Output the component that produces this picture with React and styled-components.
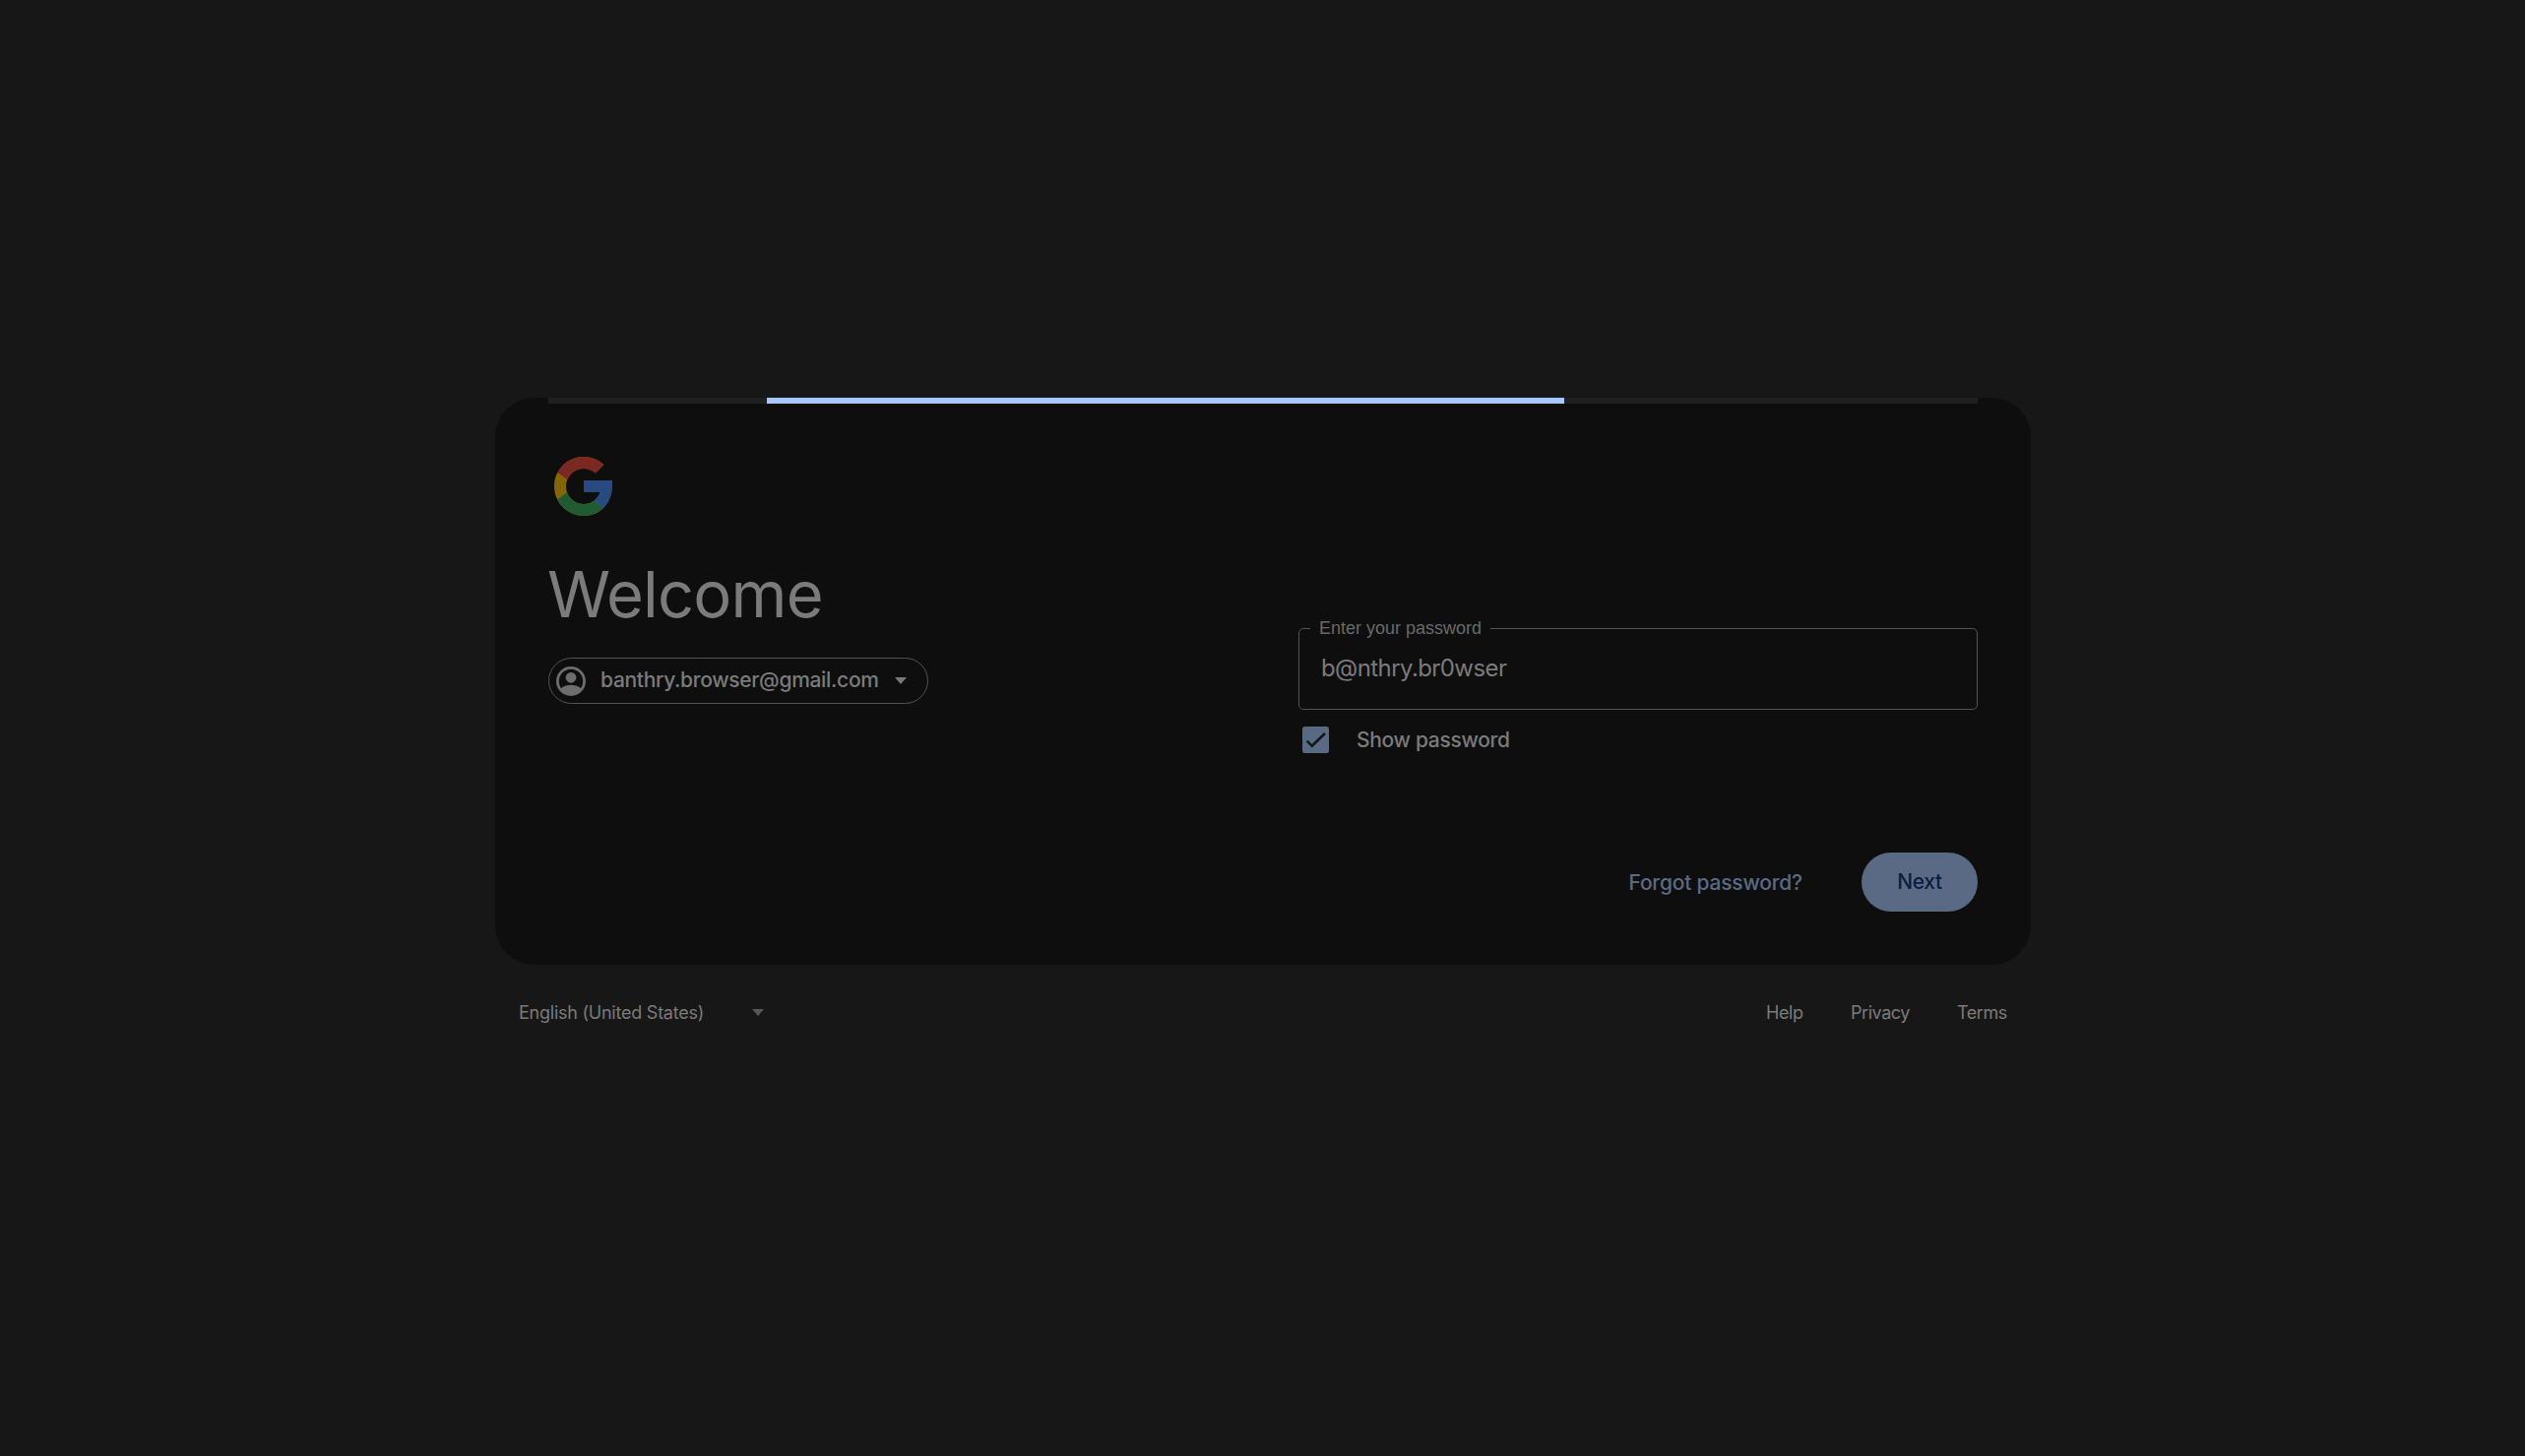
import React from "react";
import styled, { createGlobalStyle } from "styled-components";

const Global = createGlobalStyle`
  * { box-sizing: border-box; }
  html, body, #root { height: 100%; margin: 0; }
  body {
    background: #171717;
    color: #7b7b7b;
    font-family: Inter, Roboto, "Liberation Sans", sans-serif;
    overflow: hidden;
  }
`;

const Page = styled.div`
  min-height: 100vh;
  display: flex;
  flex-direction: column;
  align-items: center;
  padding: 404px 0 0 1px;
`;

const Card = styled.main`
  width: 1560px;
  height: 576px;
  background: #0e0e0e;
  border-radius: 40px;
  padding: 0 54px;
  display: flex;
  flex-direction: column;
`;

const Track = styled.div`
  display: flex;
  height: 6px;
  background: #1e2021;
  padding-left: 221.5px;
`;

const Bar = styled.div`
  width: 810px;
  height: 6px;
  background: #a8c7fa;
`;

const Columns = styled.div`
  display: flex;
  justify-content: space-between;
  padding-top: 48px;
`;

const Intro = styled.section`
  display: flex;
  flex-direction: column;
  align-items: flex-start;
`;

const Logo = styled.svg`
  display: block;
  width: 72px;
  height: 72px;
`;

const Title = styled.h1`
  margin: 34px 0 0 -1px;
  height: 80px;
  line-height: 80px;
  font-size: 65px;
  font-weight: 400;
  letter-spacing: -0.8px;
  white-space: nowrap;
`;

const Account = styled.button`
  margin-top: 24px;
  width: 386px;
  height: 47px;
  padding: 0 20px 0 7px;
  display: flex;
  align-items: center;
  border: 1px solid #525453;
  border-radius: 24px;
  background: none;
  color: inherit;
  font: 500 21px/30px Inter, sans-serif;
  letter-spacing: -0.31px;
  white-space: nowrap;
`;

const Avatar = styled.svg`
  width: 30px;
  height: 30px;
  margin-right: 15px;
  flex: none;
`;

const Email = styled.span`
  width: 283px;
  padding-bottom: 2px;
  text-align: left;
`;

const Caret = styled.svg`
  display: block;
  width: 12px;
  height: 7px;
  flex: none;
  margin-left: ${(p) => p.$gap}px;
`;

const Form = styled.form`
  width: 690px;
  padding-top: 169px;
`;

const Field = styled.fieldset`
  margin: 0;
  min-width: 0;
  width: 690px;
  height: 94px;
  padding: 0 22px;
  border: 1px solid #525453;
  border-radius: 5px;
`;

const Legend = styled.legend`
  margin-left: -11px;
  padding: 0 9px;
  height: 22px;
  line-height: 22px;
  width: 183px;
  color: #696a69;
  font-family: "Liberation Sans", Arial, sans-serif;
  font-size: 18px;
  white-space: nowrap;
`;

const Value = styled.div`
  padding-top: 15px;
  line-height: 30px;
  font-size: 24px;
  letter-spacing: -0.58px;
`;

const Check = styled.label`
  display: flex;
  align-items: center;
  height: 29px;
  margin: 16px 0 0 4px;
  font-size: 21px;
  font-weight: 500;
  letter-spacing: -0.32px;
`;

const Box = styled.svg`
  display: block;
  width: 27px;
  height: 27px;
  margin-right: 28px;
`;

const Actions = styled.div`
  display: flex;
  justify-content: flex-end;
  align-items: center;
  height: 60px;
  margin-top: 100px;
`;

const Forgot = styled.a`
  margin-right: 60px;
  color: #5b6a84;
  font-size: 21px;
  font-weight: 500;
  letter-spacing: -0.2px;
`;

const Next = styled.button`
  width: 118px;
  height: 60px;
  border: 0;
  border-radius: 30px;
  background: #5b6a84;
  color: #0a1e3f;
  font: 500 21px/30px Inter, sans-serif;
  letter-spacing: -0.4px;
`;

const Footer = styled.footer`
  width: 1512px;
  height: 40px;
  margin-top: 28px;
  display: flex;
  align-items: center;
  justify-content: space-between;
  font-size: 18px;
`;

const Language = styled.div`
  display: flex;
  align-items: center;
`;

const LanguageName = styled.span`
  width: 188px;
  white-space: nowrap;
  letter-spacing: -0.24px;
`;

const Links = styled.nav`
  display: flex;
`;

const Link = styled.a`
  width: ${(p) => p.$w}px;
  letter-spacing: -0.45px;
`;

export default function App() {
  return (
    <>
      <Global />
      <Page>
        <Card>
          <Track><Bar /></Track>
          <Columns>
            <Intro>
              <Logo viewBox="0 0 48 48">
                <path fill="#856509" d="M43.2 20H24v8h11.303c-1.649 4.657-6.08 8-11.303 8-6.627 0-12-5.373-12-12s5.373-12 12-12c3.059 0 5.842 1.154 7.961 3.039l5.657-5.657C34.046 6.053 29.268 4 24 4 12.955 4 4 12.955 4 24s8.955 20 20 20c5.5 0 10-2 13.250-5.300z" />
                <path fill="#7c2822" d="M6.306 14.691l6.571 4.819C14.655 15.108 18.961 12 24 12c3.059 0 5.842 1.154 7.961 3.039l5.657-5.657C34.046 6.053 29.268 4 24 4 16.318 4 9.656 8.337 6.306 14.691z" />
                <path fill="#215b31" d="M24 44c5.166 0 9.86-1.977 13.409-5.192l-6.19-5.238C29.211 35.091 26.715 36 24 36c-5.202 0-9.619-3.317-11.283-7.946l-6.522 5.025C9.505 39.556 16.227 44 24 44z" />
                <path fill="#284a81" d="M43.2 20H24v8h10.900c-.75 2.200-2 4.100-3.750 5.450l6.250 5.350C41.300 34.900 43.350 29.600 43.350 24c0-1.400-.05-2.700-.15-4z" />
              </Logo>
              <Title>Welcome</Title>
              <Account type="button">
                <Avatar viewBox="0 0 30 30">
                  <circle cx="15" cy="15" r="13.6" fill="none" stroke="#6c6d6c" strokeWidth="2.8" />
                  <circle cx="15" cy="11.3" r="5.4" fill="#6c6d6c" />
                  <path fill="#6c6d6c" d="M4 23c3-2.800 6.800-4.200 11-4.200S23 20.200 26 23c-2.600 3.800-6.500 6-11 6S6.600 26.800 4 23z" />
                </Avatar>
                <Email>banthry.browser@gmail.com</Email>
                <Caret $gap={16} viewBox="0 0 12 7"><path fill="#787878" d="M0 0h12L6 7z" /></Caret>
              </Account>
            </Intro>
            <Form>
              <Field>
                <Legend>Enter your password</Legend>
                <Value>b@nthry.br0wser</Value>
              </Field>
              <Check>
                <Box viewBox="0 0 27 27">
                  <rect width="27" height="27" rx="2.5" fill="#5b6a84" />
                  <path d="M4.700 14.700l5.100 5.100L23 7" fill="none" stroke="#131416" strokeWidth="2.6" />
                </Box>
                <span>Show password</span>
              </Check>
              <Actions>
                <Forgot>Forgot password?</Forgot>
                <Next type="button">Next</Next>
              </Actions>
            </Form>
          </Columns>
        </Card>
        <Footer>
          <Language>
            <LanguageName>English (United States)</LanguageName>
            <Caret $gap={49} viewBox="0 0 12 7"><path fill="#55585b" d="M0 0h12L6 7z" /></Caret>
          </Language>
          <Links>
            <Link $w={86}>Help</Link>
            <Link $w={108}>Privacy</Link>
            <Link $w={51}>Terms</Link>
          </Links>
        </Footer>
      </Page>
    </>
  );
}
